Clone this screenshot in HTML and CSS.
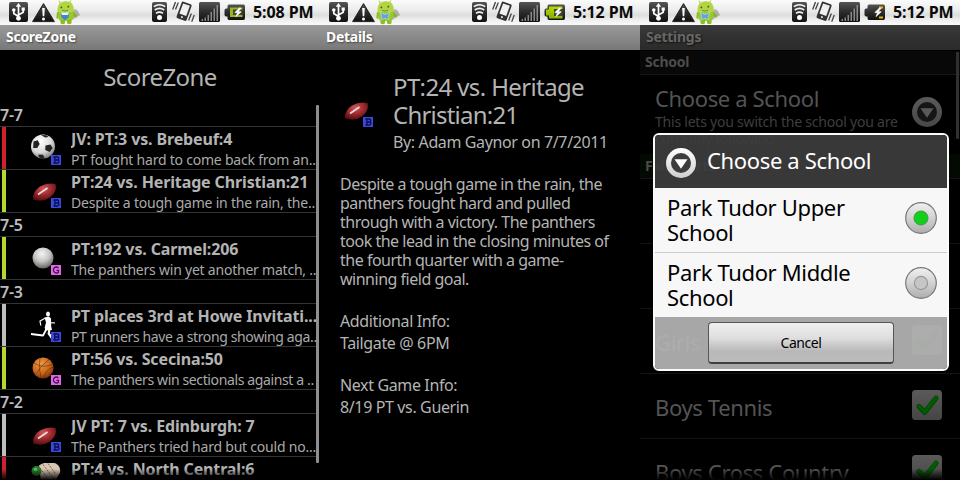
FILE: index.html
```
<!DOCTYPE html>
<html lang="en">
<head>
<meta charset="utf-8">
<title>ScoreZone</title>
<link rel="stylesheet" href="styles.css">
</head>
<body>
<svg class="defs" width="0" height="0">
  <defs>
    <linearGradient id="dark" x1="0" y1="0" x2="0" y2="1"><stop offset="0" stop-color="#555"/><stop offset=".5" stop-color="#2c2c2c"/><stop offset="1" stop-color="#111"/></linearGradient>
    <linearGradient id="limeg" x1="0" y1="0" x2="0" y2="1"><stop offset="0" stop-color="#b4dc00"/><stop offset="1" stop-color="#86b000"/></linearGradient>
    <radialGradient id="white-ball" cx=".4" cy=".3" r=".75"><stop offset="0" stop-color="#fff"/><stop offset=".6" stop-color="#d8d8d8"/><stop offset="1" stop-color="#777"/></radialGradient>
    <radialGradient id="grey-ball" cx=".45" cy=".3" r=".75"><stop offset="0" stop-color="#f4f4f2"/><stop offset=".5" stop-color="#c4c4c2"/><stop offset="1" stop-color="#555"/></radialGradient>
    <radialGradient id="orange-ball" cx=".4" cy=".3" r=".75"><stop offset="0" stop-color="#f09a45"/><stop offset=".6" stop-color="#c9651c"/><stop offset="1" stop-color="#6b2c08"/></radialGradient>
    <radialGradient id="red-ball" cx=".45" cy=".3" r=".75"><stop offset="0" stop-color="#d0565a"/><stop offset=".55" stop-color="#962529"/><stop offset="1" stop-color="#4a0d10"/></radialGradient>
    <linearGradient id="ring" x1="0" y1="0" x2="0" y2="1"><stop offset="0" stop-color="#fff"/><stop offset="1" stop-color="#cfcfcf"/></linearGradient>
    <linearGradient id="radio" x1="0" y1="0" x2="0" y2="1"><stop offset="0" stop-color="#f0f0f0"/><stop offset=".5" stop-color="#d2d2d2"/><stop offset="1" stop-color="#adadad"/></linearGradient>

    <symbol id="notices" viewBox="0 0 80 25">
      <rect x="9" y="2" width="19" height="20" rx="2" fill="url(#dark)"/>
      <g stroke="#fff" stroke-width="1.7" fill="none"><path d="M18.5 6v12M18.5 16.500l-4.700-3V10M18.5 15l4.700-2.800V9.600"/></g>
      <path d="M18.5 3l2.700 3.800h-5.400z" fill="#fff"/><circle cx="18.5" cy="18.300" r="2.400" fill="#fff"/><circle cx="13.800" cy="10" r="1.800" fill="#fff"/><path d="M21.600 7.500h3.200v3.200h-3.200z" fill="#fff"/>
      <path d="M43.5 3.6L54.4 21.6H32.6z" fill="url(#dark)" stroke="#222" stroke-width="1" stroke-linejoin="round"/>
      <path d="M42.2 8h2.600l-.5 8.300h-1.600z" fill="#fff"/><circle cx="43.5" cy="19" r="1.500" fill="#fff"/>
      <path d="M72 20l8-5-2-4-3-2-3 3z" fill="#999" opacity=".7"/>
      <path d="M60.600 3.500L59 .8M69.500 2.500L71 .5" stroke="#9fc93f" stroke-width="1"/>
      <path d="M57.600 11.500C57 4.500 60 1.400 65.500 1.200S73.900 4 74 11.500z" fill="#b2d640"/>
      <path d="M57.600 11.500h16.300l-.9 6.500q-.6 3-3 3h-8.500q-2.500 0-3-3z" fill="#9cc92a"/>
      <path d="M56.900 12.500l-.5 5.500q1 1.500 2 0V12M73.500 11.500l3.600 3.800-.8 2.500-3-1.500" fill="#8ab51e"/>
      <path d="M60.500 19.500h4.500v3.800q-2.200 1.800-4.500 0zM67 19.500h4.500v3.800q-2.200 1.800-4.500 0z" fill="#8fbb1c"/>
      <circle cx="61.400" cy="7.400" r=".9" fill="#465030"/><circle cx="68.300" cy="6.700" r=".9" fill="#465030"/>
      <path d="M62 10.300q3 1.500 6 0" fill="none" stroke="#577020" stroke-width=".7"/>
    </symbol>
    <symbol id="bow" viewBox="0 0 80 25"><path d="M60 12.500l5 2 5-2-1.800 3.800 1 3.800-4.200-2-4.200 2 1-3.800z" fill="#5ba4e0" stroke="#d5e8f6" stroke-width=".5"/></symbol>
    <symbol id="bib" viewBox="0 0 80 25"><path d="M60.800 13h8.400l-.6 4.400-3.600 2.800-3.600-2.800z" fill="#3f86cf"/><path d="M61 12.400h8l-1 2.600h-6z" fill="#e9f2fa"/></symbol>
    <symbol id="signals" viewBox="0 0 100 25">
      <rect x="2" y="2" width="15" height="20" rx="2" fill="url(#dark)"/>
      <g fill="none" stroke="#f4f4f4" stroke-width="1.6"><path d="M3.800 6.600q5.700-3.800 11.400 0M4.800 10q4.700-3.200 9.400 0M6 13.300q3.500-2.400 7 0"/></g><circle cx="9.500" cy="17.600" r="2.500" fill="#fff"/>
      <g transform="rotate(20 34 11.500)"><rect x="28.700" y="2.500" width="10.600" height="17.500" rx="1.500" fill="#333"/><rect x="30.400" y="4.200" width="7.200" height="10.800" fill="#f0f0f0"/><circle cx="34" cy="17.500" r="1" fill="#eee"/></g>
      <path d="M25.500 2l-2.800 7.500M28.300 2.500l-2.800 7M41.300 13.500l-2.600 7M44.300 15l-2.600 6.800" stroke="#444" stroke-width="1.300" fill="none"/>
      <rect x="49" y="2" width="21" height="20" rx="1.500" fill="url(#dark)"/>
      <g fill="#8a8a8a"><path d="M51.500 19h1.500v2h-1.500zM54.500 17.500h1.500V21h-1.500zM57.500 15h1.500v6h-1.500zM60.500 12h1.500v9h-1.500zM63.500 8.500H65V21h-1.500zM66.500 5H68v16h-1.500z"/></g>
    </symbol>
    <symbol id="battery" viewBox="0 0 22 17">
      <path d="M5 .5h14.500q1.500 0 1.500 2v11.500q0 2-1.500 2H5q-1.500 0-1.500-2v-1.500H2.200Q.5 12.500.5 10.500v-4Q.5 4.500 2.200 4.500h1.300V2.500Q3.500.5 5 .5z" fill="url(#dark)"/>
    </symbol>
    <symbol id="bolt" viewBox="0 0 22 17"><path d="M15.500 4l-4.700 4.600h2.800l-1.600 4 5.200-4.800h-3.100L17 4.200z" fill="#fff" stroke="#fff" stroke-width=".7"/></symbol>

    <symbol id="badge-b" viewBox="0 0 10 10"><path fill="#3a48dc" d="M0 0h10v10H0z"/><path d="M2.500 2h3.800q1.400 0 1.400 1.500T6.300 5q1.700 0 1.700 1.500T6.300 8H2.500M3.800 2v6M3.800 5h2.500" fill="none" stroke="#0a0e50" stroke-width="1.300"/></symbol>
    <symbol id="badge-g" viewBox="0 0 10 10"><path fill="#e06ae0" d="M0 0h10v10H0z"/><path d="M7.500 3Q5.500 1.300 3.600 2.600 2 4 2.600 6q.9 2 2.900 2 1.200 0 2-.8V5.400H5.400" fill="none" stroke="#48105a" stroke-width="1.300"/></symbol>
    <symbol id="soccer" viewBox="0 0 32 32"><circle cx="14" cy="13.500" r="12" fill="url(#white-ball)"/><path d="M4.500 8.500l4.200-1.300 2 3.800-2.500 4-4 0zM16.500 12.500l5-1 2.200 3.600-3 4-4.500-2zM12 1.900l5.500.4 2 1.700-3.500.6zM9.500 21.500l4.500.3 1.500 3.200-3.200.4q-2-1-2.800-1.700z" fill="#222"/></symbol>
    <symbol id="football" viewBox="0 0 32 32"><path d="M4 23.500Q3.500 15.500 11 10.500 18 6.500 26.500 8 28.500 15.500 21 21.500 14 26.500 4 23.500z" fill="url(#red-ball)"/><path d="M9 18.500l9.500-6.500" stroke="#f0dede" stroke-width="1.700"/></symbol>
    <symbol id="golf" viewBox="0 0 32 32"><circle cx="14" cy="15" r="10.500" fill="url(#grey-ball)"/></symbol>
    <symbol id="basket" viewBox="0 0 32 32"><circle cx="14" cy="15" r="10.500" fill="url(#orange-ball)"/><path d="M5 10q9 6 19 1M11 5q-2 10 1 20M20 6.500q-9 7-13 14.500M24 14q-8 3-9 11" fill="none" stroke="#5f2b0a" stroke-width=".6"/></symbol>
    <symbol id="runner" viewBox="0 0 32 32"><ellipse cx="19" cy="4" rx="2" ry="2.500" fill="#fff"/><path d="M20 8.500l1.500 4.200 4.500.3" fill="none" stroke="#fff" stroke-width="1.200"/><path d="M15.500 7.500l4.500-1 2 2 .2 8 .8 3.500-6.500.5-.8-3 1.300-5z" fill="#fff"/><path d="M16.500 8l-5.500 3 .8 4.500" fill="none" stroke="#fff" stroke-width="1.200"/><path d="M17.500 19l-3.500 6.500-12-1.500" fill="none" stroke="#fff" stroke-width="1.800" stroke-linejoin="round"/><path d="M20.500 19l-.8 4.500 4.300 6" fill="none" stroke="#fff" stroke-width="2.200" stroke-linejoin="round"/></symbol>
    <symbol id="baseball" viewBox="0 0 32 32"><path d="M10 2.500Q17 -2.500 27 .5q5 3 4 9l-5 9H12z" fill="#d6c6b2"/><path d="M14 1.500l12 16M19 .5l8 11M11 5l9 13" stroke="#8b5a45" stroke-width="1" stroke-dasharray="2 1.300"/><circle cx="7.500" cy="8" r="5" fill="#257f2b"/><circle cx="6.500" cy="6.500" r="1.800" fill="#63b866"/></symbol>

    <symbol id="drop" viewBox="0 0 30 30"><circle cx="15" cy="15" r="15" fill="url(#ring)"/><circle cx="15" cy="15" r="10" fill="#3d3d3d"/><path d="M8.500 11.300h13L15 20.700z" fill="#fff"/></symbol>
    <symbol id="check" viewBox="0 0 30 30"><rect width="30" height="30" rx="3.500" fill="url(#box)"/><path d="M7 16.500l5.700 5.800L24 8.200" fill="none" stroke="#003c00" stroke-width="5" stroke-linejoin="round" stroke-linecap="round"/><path d="M7 16.200l5.700 5.800L24 8" fill="none" stroke="#005c00" stroke-width="3.600" stroke-linejoin="round" stroke-linecap="round"/></symbol>
    <linearGradient id="box" x1="0" y1="0" x2="0" y2="1"><stop offset="0" stop-color="#5a5a5a"/><stop offset="1" stop-color="#454545"/></linearGradient>
  </defs>
</svg>
<main class="screens">
  <section class="screen">
    <div class="status">
      <svg class="notices" viewBox="0 0 80 25"><use href="#notices"/><use href="#bib"/></svg>
      <svg class="signals" viewBox="0 0 100 25"><use href="#signals"/></svg>
      <svg class="battery" viewBox="0 0 22 17"><use href="#battery"/><path d="M6 3.500h12.500v9.500H6z" fill="#98b522"/><path d="M9 5.500h10v5.500H9z" fill="#2c2c2c" opacity=".8"/><use href="#bolt"/></svg>
      <time>5:08 PM</time>
    </div>
    <header class="appbar">ScoreZone</header>
    <div class="feed">
      <h1 class="feed-title">ScoreZone</h1>
      <h2 class="day">7-7</h2>
      <article class="row loss"><svg class="sport" viewBox="0 0 32 32"><use href="#soccer"/><use href="#badge-b" x="22" y="22" width="10" height="10"/></svg><div class="text"><h3>JV: PT:3 vs. Brebeuf:4</h3><p>PT fought hard to come back from an..</p></div></article>
      <article class="row win"><svg class="sport" viewBox="0 0 32 32"><use href="#football"/><use href="#badge-b" x="22" y="22" width="10" height="10"/></svg><div class="text"><h3>PT:24 vs. Heritage Christian:21</h3><p>Despite a tough game in the rain, the..</p></div></article>
      <h2 class="day">7-5</h2>
      <article class="row win"><svg class="sport" viewBox="0 0 32 32"><use href="#golf"/><use href="#badge-g" x="22" y="22" width="10" height="10"/></svg><div class="text"><h3>PT:192 vs. Carmel:206</h3><p>The panthers win yet another match, ..</p></div></article>
      <h2 class="day">7-3</h2>
      <article class="row neutral"><svg class="sport" viewBox="0 0 32 32"><use href="#runner"/><use href="#badge-b" x="22" y="22" width="10" height="10"/></svg><div class="text"><h3>PT places 3rd at Howe Invitati...</h3><p class="snug">PT runners have a strong showing aga..</p></div></article>
      <article class="row win"><svg class="sport" viewBox="0 0 32 32"><use href="#basket"/><use href="#badge-g" x="22" y="22" width="10" height="10"/></svg><div class="text"><h3>PT:56 vs. Scecina:50</h3><p class="snug">The panthers win sectionals against a ..</p></div></article>
      <h2 class="day">7-2</h2>
      <article class="row neutral"><svg class="sport" viewBox="0 0 32 32"><use href="#football"/><use href="#badge-b" x="22" y="22" width="10" height="10"/></svg><div class="text"><h3>JV PT: 7 vs. Edinburgh: 7</h3><p>The Panthers tried hard but could no...</p></div></article>
      <article class="row loss"><svg class="sport" viewBox="0 0 32 32"><use href="#baseball"/></svg><div class="text"><h3>PT:4 vs. North Central:6</h3></div></article>
      <div class="thumb feed-thumb"></div>
      <div class="fade"></div>
    </div>
  </section>

  <section class="screen">
    <div class="status">
      <svg class="notices" viewBox="0 0 80 25"><use href="#notices"/><use href="#bow"/></svg>
      <svg class="signals" viewBox="0 0 100 25"><use href="#signals"/></svg>
      <svg class="battery" viewBox="0 0 22 17"><use href="#battery"/><path d="M5 2.500h13.500v12H5V11.500H2V5.500h3z" fill="url(#limeg)"/><path d="M10 5h9.500v7H10z" fill="#333" opacity=".85"/><use href="#bolt"/></svg>
      <time>5:12 PM</time>
    </div>
    <header class="appbar">Details</header>
    <div class="detail">
      <div class="detail-head">
        <svg class="sport" viewBox="0 0 32 32"><use href="#football"/><use href="#badge-b" x="22" y="22" width="10" height="10"/></svg>
        <div>
          <h1><span>PT:24 vs. Heritage</span><br><span class="tight">Christian:21</span></h1>
          <p class="byline">By: Adam Gaynor on 7/7/2011</p>
        </div>
      </div>
      <p class="story">Despite a tough game in the rain, the<br>panthers fought hard and pulled<br>through with a victory. The panthers<br>took the lead in the closing minutes of<br>the fourth quarter with a game-<br>winning field goal.</p>
      <p class="info">Additional Info:<br>Tailgate @ 6PM</p>
      <p class="info">Next Game Info:<br>8/19 PT vs. Guerin</p>
    </div>
  </section>

  <section class="screen">
    <div class="status">
      <svg class="notices" viewBox="0 0 80 25"><use href="#notices"/><use href="#bow"/></svg>
      <svg class="signals" viewBox="0 0 100 25"><use href="#signals"/></svg>
      <svg class="battery" viewBox="0 0 22 17"><use href="#battery"/><path d="M15 2.500h4v2h-4zM15 12.500h4v2h-4z" fill="#f0b400"/><use href="#bolt"/></svg>
      <time>5:12 PM</time>
    </div>
    <header class="appbar dim">Settings</header>
    <div class="settings">
      <h2 class="group">School</h2>
      <div class="pref choose"><div><h3>Choose a School</h3><p>This lets you switch the school you are<br>currently following.</p></div><svg class="control dimmed" viewBox="0 0 30 30"><use href="#drop"/></svg></div>
      <h2 class="group green">Fall Sports</h2>
      <div class="pref sport-pref"></div>
      <div class="pref sport-pref"></div>
      <div class="pref sport-pref"><h3>Girls</h3><svg class="control" viewBox="0 0 30 30"><use href="#check"/></svg></div>
      <div class="pref sport-pref"><h3>Boys Tennis</h3><svg class="control" viewBox="0 0 30 30"><use href="#check"/></svg></div>
      <div class="pref sport-pref"><h3>Boys Cross Country</h3><svg class="control" viewBox="0 0 30 30"><use href="#check"/></svg></div>
      <div class="thumb settings-thumb"></div>
      <div class="fade"></div>
    </div>
    <div class="dialog">
      <header><svg viewBox="0 0 30 30"><use href="#drop"/></svg>Choose a School</header>
      <div class="option"><span>Park Tudor Upper<br>School</span><svg viewBox="0 0 32 32"><circle cx="16" cy="16" r="15.300" fill="url(#radio)" stroke="#777" stroke-width="1.200"/><circle cx="16" cy="16" r="7" fill="#12cf1c" stroke="#3c9a40" stroke-width="1"/></svg></div>
      <div class="option"><span>Park Tudor Middle<br>School</span><svg viewBox="0 0 32 32"><circle cx="16" cy="16" r="15.300" fill="url(#radio)" stroke="#777" stroke-width="1.200"/><circle cx="16" cy="16" r="6.600" fill="#c6c6c6" stroke="#999" stroke-width="1.200"/></svg></div>
      <footer><button type="button">Cancel</button></footer>
    </div>
  </section>
</main>
</body>
</html>
```
FILE: styles.css
```
* { box-sizing: border-box; }
body { margin: 0; background: #000; font-family: "Noto Sans", "Open Sans", sans-serif; color: #b4b4b4; }
h1, h2, h3, p { margin: 0; font-weight: 400; }
svg { display: block; flex: none; }
.defs { position: absolute; }
.screens { display: grid; grid-template-columns: repeat(3, 320px); height: 480px; overflow: hidden; }
.screen { position: relative; height: 480px; overflow: hidden; background: #000; }

.status { display: flex; height: 25px; background: linear-gradient(#fbfbfb, #e9ebe9 45%, #dcdedc 60%, #efefef 80%, #fafafa); }
.notices { width: 80px; height: 25px; }
.signals { width: 100px; height: 25px; margin: 0 -26px 0 70px; }
.battery { width: 22px; height: 17px; margin-top: 4px; }
.status time { margin-left: 7px; padding-top: 1px; font: 700 16px/23px "Noto Sans", sans-serif; letter-spacing: -0.08px; color: #0a0a0a; white-space: nowrap; }

.appbar { height: 25px; padding-left: 6px; font-size: 14px; font-weight: 700; line-height: 23px; letter-spacing: -0.28px; color: #fff; text-shadow: 1px 1px 2px #444; background: linear-gradient(#9a9a9a, #868686 60%, #777); }
.appbar.dim { color: #666; background: linear-gradient(#3a3a3a, #303230 45%, #2b2b2b); text-shadow: 1px 1px 2px #111; }

.feed, .settings { position: relative; height: 430px; overflow: hidden; }
.feed-title { height: 53px; font-size: 24px; line-height: 53px; letter-spacing: -0.6px; text-align: center; }
.day { width: 316px; height: 24px; border-bottom: 1px solid #343434; font-size: 16px; font-weight: 600; line-height: 24px; letter-spacing: -0.2px; color: #bcbcbc; }
.row { display: flex; width: 316px; height: 43px; padding-left: 2px; border-bottom: 1px solid #343434; }
.row::before { content: ""; width: 4px; height: 42px; flex: none; }
.loss::before { background: #d02030; }
.win::before { background: #b4d830; }
.neutral::before { background: #bebebe; }
.row .sport { width: 32px; height: 32px; margin: 6px 10px 0 23px; overflow: visible; }
.text { flex: 1; min-width: 0; }
.text h3, .text p { overflow: hidden; white-space: nowrap; }
.text h3 { margin-top: 1px; font-size: 16px; font-weight: 700; line-height: 22px; letter-spacing: -0.13px; }
.text p { font-size: 14px; line-height: 19px; letter-spacing: -0.22px; color: #aaa; }
.text p.snug { letter-spacing: -0.37px; }
.thumb { position: absolute; width: 3px; border-radius: 1px; }
.feed-thumb { left: 316px; top: 55px; height: 358px; background: #8e8e8e; }
.settings-thumb { left: 316px; top: 2px; height: 87px; background: #303030; }
.fade { position: absolute; left: 0; right: 0; bottom: 0; height: 11px; background: linear-gradient(transparent, #000); }

.detail { padding: 23px 20px 0; }
.detail-head { display: flex; }
.detail-head .sport { width: 32px; height: 32px; margin: 22px 20px 0 1px; }
.detail h1 { font-size: 24px; line-height: 28px; letter-spacing: -0.62px; white-space: nowrap; }
.detail h1 .tight { letter-spacing: -0.78px; }
.byline { font-size: 16px; line-height: 26px; letter-spacing: -0.37px; }
.story { margin-top: 20px; font-size: 16px; line-height: 19px; letter-spacing: -0.49px; white-space: nowrap; }
.info { margin-top: 21px; font-size: 16px; line-height: 22px; letter-spacing: -0.37px; }
.info + .info { margin-top: 20px; }

.settings { padding-top: 1px; color: #545454; }
.group { height: 24px; padding-left: 5px; border-bottom: 1px solid #161616; background: #080808; font-size: 14px; font-weight: 700; line-height: 21px; letter-spacing: -0.25px; color: #4c4c4c; }
.group.green { height: 25px; line-height: 23px; background: #020a02; }
.pref { display: flex; justify-content: space-between; align-items: center; padding: 0 18px 0 15px; border-bottom: 1px solid #121212; }
.pref h3 { font-size: 22px; line-height: 30px; letter-spacing: -0.36px; white-space: nowrap; }
.choose { height: 79px; align-items: flex-start; padding-top: 8px; border: 0; }
.choose p { font-size: 14px; line-height: 17px; letter-spacing: -0.22px; white-space: nowrap; color: #3e3e3e; }
.control { width: 30px; height: 30px; }
.choose .control { margin-top: 14px; margin-left: -30px; }
.dimmed { opacity: .35; }
.sport-pref { height: 65px; }
.sport-pref h3 { padding-top: 2px; }
.sport-pref .control { margin-top: -3px; }

.dialog { position: absolute; left: 13px; top: 133px; width: 296px; height: 238px; border: 2px solid #fafafa; border-radius: 6px; overflow: hidden; color: #000; font-size: 22px; letter-spacing: -0.35px; }
.dialog header { display: flex; height: 53px; padding: 13px 0 0 11px; gap: 11px; background: rgba(60, 60, 60, .93); color: #fff; line-height: 25px; white-space: nowrap; }
.dialog header svg { width: 30px; height: 30px; }
.option { display: flex; justify-content: space-between; align-items: center; height: 64px; padding: 0 10px 0 12px; background: #f7f7f7; line-height: 25px; }
.option + .option { height: 65px; border-top: 1px solid #ccc; }
.option svg { width: 32px; height: 32px; margin-top: -5px; }
.dialog footer { height: 52px; padding: 5px 0 0 53px; background: rgba(180, 180, 180, .93); }
button { display: block; width: 186px; height: 42px; padding: 1px 0 0; border: 1px solid #555; border-bottom: 2px solid #3f3f3f; border-radius: 4px; background: linear-gradient(#efefef, #dedede 38%, #b9b9b9 72%, #bcbcbc); font: 400 14px/20px "Noto Sans", sans-serif; letter-spacing: -0.45px; color: #000; }
```
